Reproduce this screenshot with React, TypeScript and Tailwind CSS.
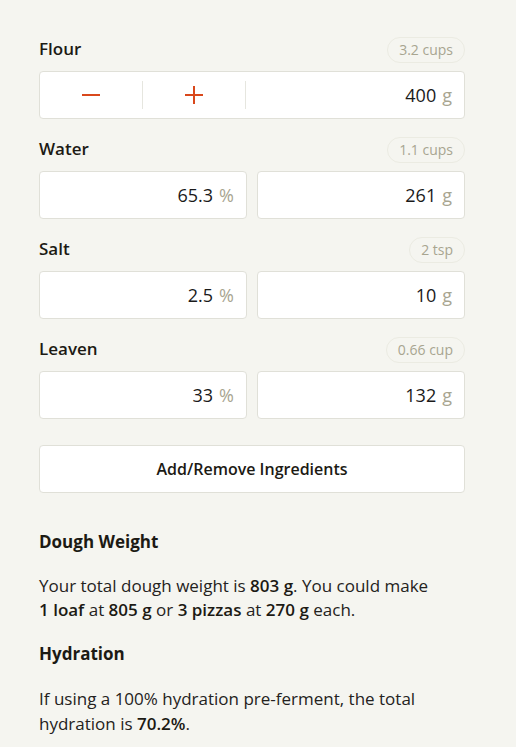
import React from "react";

const font = { fontFamily: "'Open Sans', 'Noto Sans', sans-serif" };

function Badge({ children }: { children: React.ReactNode }) {
  return (
    <span className="h-[26px] px-[11px] rounded-full border border-[#ebebe2] text-[14px] leading-[24px] text-[#a8a590]">
      {children}
    </span>
  );
}

function Label({ name, badge }: { name: string; badge: string }) {
  return (
    <div className="flex items-center justify-between h-[27px] mb-[8px]">
      <span className="text-[17px] leading-[24px] font-semibold text-[#1c1a14] -mt-[2px]">{name}</span>
      <Badge>{badge}</Badge>
    </div>
  );
}

function Field({ value, unit }: { value: string; unit: string }) {
  return (
    <div className="flex-1 h-[48px] bg-white border border-[#e0e0d8] rounded-[4px] flex items-center justify-end pr-[12px] text-[18px]">
      <span className="text-[#1a1a1a]">{value}</span>
      <span className="ml-[6px] text-[#a8a590]">{unit}</span>
    </div>
  );
}

function Row({
  name,
  badge,
  pct,
  grams,
}: {
  name: string;
  badge: string;
  pct: string;
  grams: string;
}) {
  return (
    <div className="mt-[17px]">
      <Label name={name} badge={badge} />
      <div className="flex gap-[10px]">
        <Field value={pct} unit="%" />
        <Field value={grams} unit="g" />
      </div>
    </div>
  );
}

export default function App() {
  return (
    <div className="min-h-[747px] bg-[#f5f5f0] pt-[36px] pb-[20px]" style={font}>
      <div className="w-[426px] ml-[39px]">
        <div>
          <Label name="Flour" badge="3.2 cups" />
          <div className="h-[48px] bg-white border border-[#e0e0d8] rounded-[4px] flex items-center">
            <div className="w-[102px] h-full flex items-center justify-center">
              <svg width="20" height="20" viewBox="0 0 20 20">
                <path d="M1 10 H19" stroke="#d9481c" strokeWidth="2" />
              </svg>
            </div>
            <div className="w-px h-[28px] bg-[#e6e6df]" />
            <div className="w-[102px] h-full flex items-center justify-center">
              <svg width="20" height="20" viewBox="0 0 20 20">
                <path d="M1 10 H19 M10 1 V19" stroke="#d9481c" strokeWidth="2" />
              </svg>
            </div>
            <div className="w-px h-[28px] bg-[#e6e6df]" />
            <div className="flex-1 flex items-center justify-end pr-[12px] text-[18px]">
              <span className="text-[#1a1a1a]">400</span>
              <span className="ml-[6px] text-[#a8a590]">g</span>
            </div>
          </div>
        </div>
        <Row name="Water" badge="1.1 cups" pct="65.3" grams="261" />
        <Row name="Salt" badge="2 tsp" pct="2.5" grams="10" />
        <Row name="Leaven" badge="0.66 cup" pct="33" grams="132" />

        <button className="mt-[26px] w-full h-[48px] bg-white border border-[#e0e0d8] rounded-[4px] text-[16px] font-semibold text-[#1c1a14]">
          Add/Remove Ingredients
        </button>

        <h2 className="mt-[37px] text-[17px] font-bold text-[#1c1a14] leading-[24px]">Dough Weight</h2>
        <p className="mt-[20px] text-[17px] leading-[24px] text-[#242220]">
          Your total dough weight is <b className="font-semibold text-[#1c1a14]">803 g</b>. You could make{" "}
          <b className="font-semibold text-[#1c1a14] whitespace-nowrap">1 loaf</b> at{" "}
          <b className="font-semibold text-[#1c1a14]">805 g</b> or{" "}
          <b className="font-semibold text-[#1c1a14]">3 pizzas</b> at{" "}
          <b className="font-semibold text-[#1c1a14]">270 g</b> each.
        </p>

        <h2 className="mt-[20px] text-[17px] font-bold text-[#1c1a14] leading-[24px]">Hydration</h2>
        <p className="mt-[20px] text-[17px] leading-[25px] text-[#242220]">
          If using a 100% hydration pre-ferment, the total hydration is{" "}
          <b className="font-semibold text-[#1c1a14]">70.2%</b>.
        </p>
      </div>
    </div>
  );
}
